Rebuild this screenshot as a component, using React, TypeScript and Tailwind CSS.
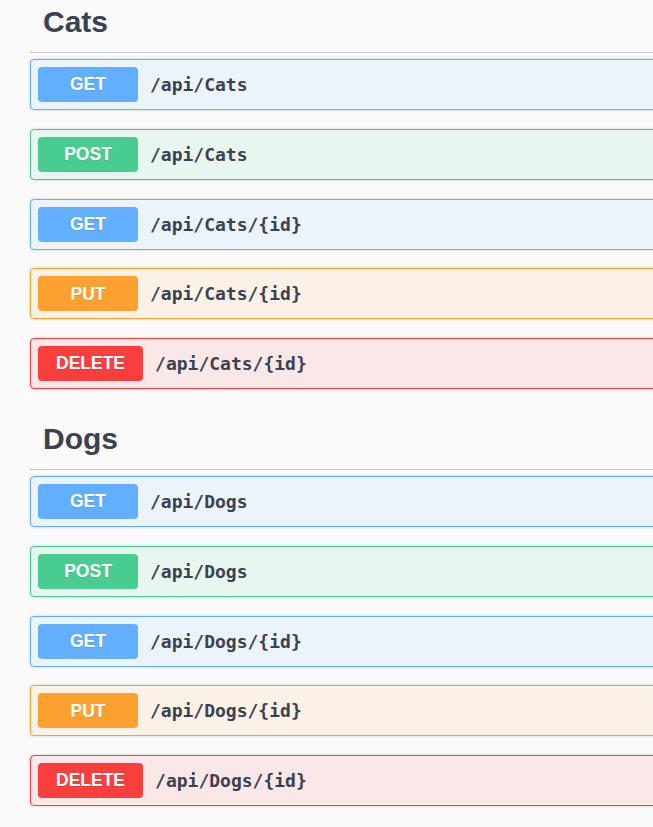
import React from "react";

type Method = "GET" | "POST" | "PUT" | "DELETE";

interface Endpoint {
  method: Method;
  path: string;
}

const methodStyles: Record<Method, { box: string; badge: string }> = {
  GET: { box: "bg-[#ebf3fb] border-[#61affe]", badge: "bg-[#61affe]" },
  POST: { box: "bg-[#e8f6f0] border-[#49cc90]", badge: "bg-[#49cc90]" },
  PUT: { box: "bg-[#fbf1e6] border-[#fca130]", badge: "bg-[#fca130]" },
  DELETE: { box: "bg-[#fae7e7] border-[#f93e3e]", badge: "bg-[#f93e3e]" },
};

const crud = (name: string): Endpoint[] => [
  { method: "GET", path: `/api/${name}` },
  { method: "POST", path: `/api/${name}` },
  { method: "GET", path: `/api/${name}/{id}` },
  { method: "PUT", path: `/api/${name}/{id}` },
  { method: "DELETE", path: `/api/${name}/{id}` },
];

const tags = [
  { name: "Cats", endpoints: crud("Cats") },
  { name: "Dogs", endpoints: crud("Dogs") },
];

function OpBlock({ endpoint }: { endpoint: Endpoint }) {
  const s = methodStyles[endpoint.method];
  return (
    <div
      className={`flex items-center h-[51px] px-[7px] border rounded-[4px] shadow-[0_0_3px_rgba(0,0,0,0.19)] ${s.box}`}
    >
      <span
        className={`min-w-[100px] h-[35px] px-[18px] flex items-center justify-center rounded-[4px] text-white font-bold text-[17.5px] [text-shadow:0_1px_0_rgba(0,0,0,0.1)] ${s.badge}`}
        style={{ fontFamily: '"Liberation Sans", Arial, sans-serif' }}
      >
        {endpoint.method}
      </span>
      <span
        className="ml-[12px] text-[18px] font-bold text-[#3b4151]"
        style={{ fontFamily: '"DejaVu Sans Mono", "Liberation Mono", monospace' }}
      >
        {endpoint.path}
      </span>
    </div>
  );
}

export default function App() {
  return (
    <div
      className="w-full min-h-[827px] bg-[#fafafa] overflow-hidden pt-[4px] flex flex-col gap-[32px]"
      style={{ fontFamily: '"Liberation Sans", Arial, sans-serif' }}
    >
      {tags.map((tag) => (
        <div key={tag.name} className="ml-[30px] w-[700px]">
          {/* Tag heading */}
          <h3 className="pl-[13px] pb-[12px] border-b border-[#c4c6cb] text-[30px] leading-[36px] font-bold text-[#3b4151]">
            {tag.name}
          </h3>

          {/* Operations */}
          <div className="mt-[6px] flex flex-col gap-[18.75px]">
            {tag.endpoints.map((ep, j) => (
              <OpBlock key={j} endpoint={ep} />
            ))}
          </div>
        </div>
      ))}
    </div>
  );
}
